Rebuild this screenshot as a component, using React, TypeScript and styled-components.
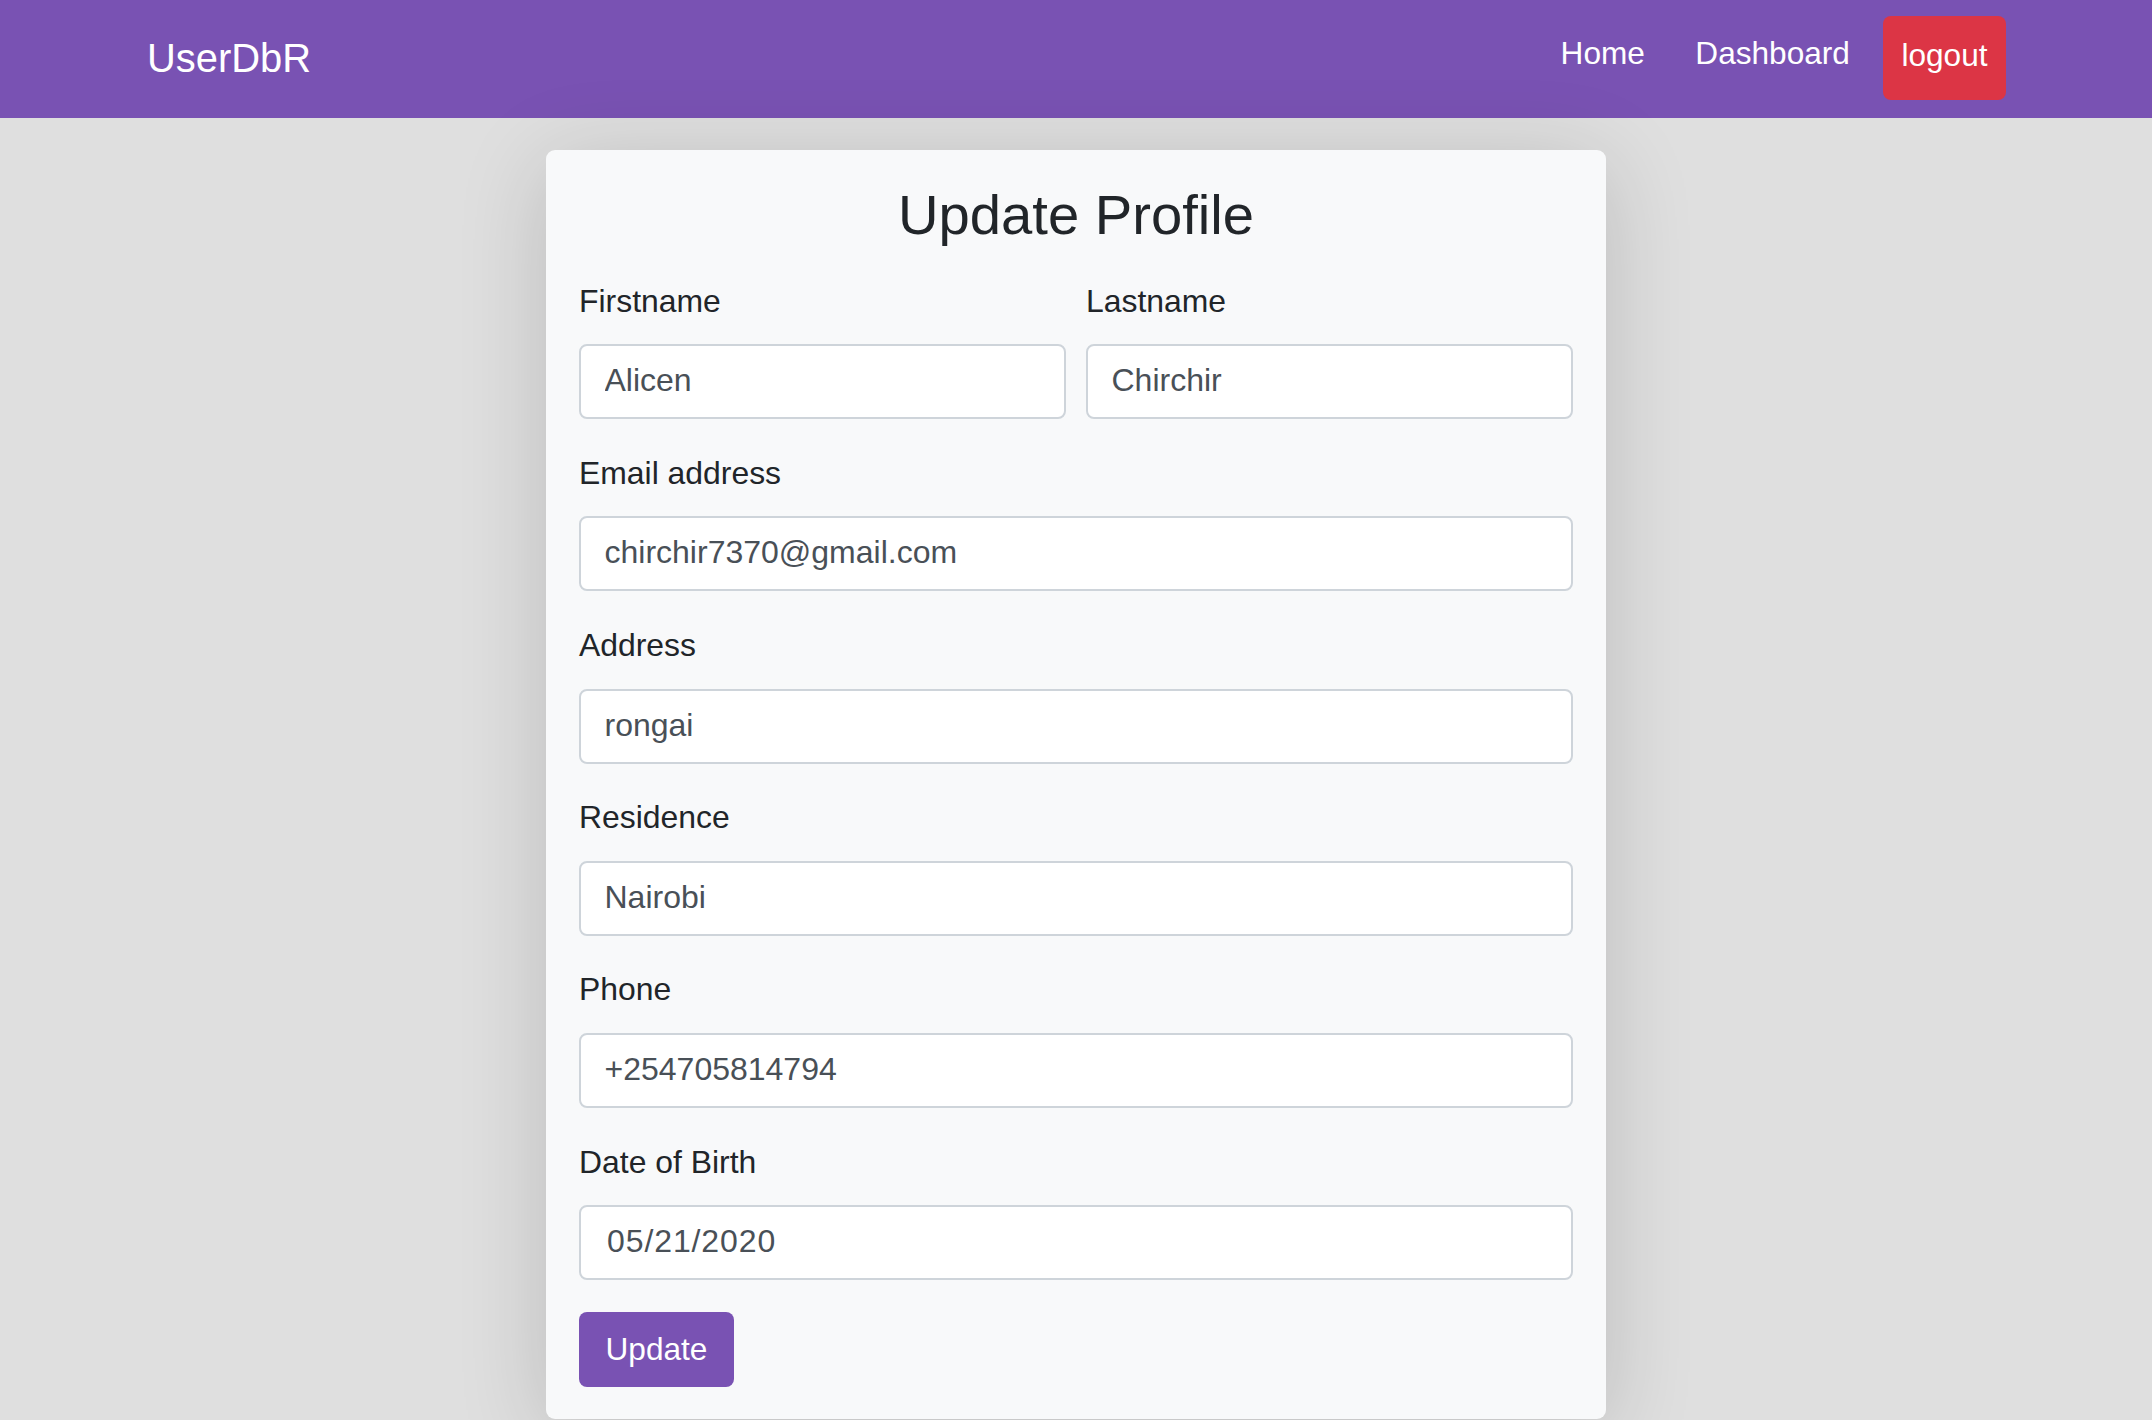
import React from "react";
import styled, { createGlobalStyle } from "styled-components";

const GlobalStyle = createGlobalStyle`
  html, body {
    margin: 0;
    padding: 0;
    overflow: hidden;
  }
  body {
    background: #dfdfdf;
    font-family: "Liberation Sans", Arial, Helvetica, sans-serif;
    color: #212529;
    min-height: 100vh;
  }
  * { box-sizing: border-box; }
`;

const Page = styled.div`
  display: flex;
  flex-direction: column;
  min-height: 100vh;
`;

const NavBar = styled.nav`
  height: 118px;
  background: #7952b3;
  display: flex;
  align-items: center;
  justify-content: space-between;
  padding: 0 146px 0 147px;
`;

const Brand = styled.a`
  font-size: 39.9px;
  line-height: 59px;
  margin-bottom: 2px;
  color: #fff;
  text-decoration: none;
`;

const NavItems = styled.div`
  display: flex;
  align-items: flex-start;
  align-self: flex-start;
  margin-top: 16px;
`;

const NavLink = styled.a<{ $gap: number }>`
  font-size: 31.6px;
  line-height: 47px;
  color: #fff;
  text-decoration: none;
  margin-top: 14px;
  margin-right: ${(p) => p.$gap}px;
`;

const LogoutButton = styled.button`
  font-family: inherit;
  font-size: 31.6px;
  line-height: 47px;
  color: #fff;
  background: #dc3545;
  border: none;
  border-radius: 8px;
  padding: 15.5px 18.5px 21px;
  cursor: pointer;
`;

const Card = styled.div`
  width: 1060px;
  margin: 32px auto 0;
  background: #f8f9fa;
  border-radius: 9px;
  padding: 31.5px 33px 32px;
  box-shadow: 0 14px 90px rgba(0, 0, 0, 0.16);
`;

const Title = styled.h3`
  margin: 0 0 30px;
  font-size: 56.2px;
  line-height: 66.6px;
  font-weight: 400;
  text-align: center;
  color: #212529;
`;

const Row = styled.div`
  display: grid;
  grid-template-columns: 1fr 1fr;
  column-gap: 20px;
`;

const Group = styled.div`
  margin-bottom: 30.8px;
`;

const Label = styled.label`
  display: block;
  font-size: 31.9px;
  line-height: 47px;
  margin-bottom: 19.3px;
  color: #212529;
`;

const Input = styled.input<{ $indent?: number; $spacing?: number }>`
  display: block;
  width: 100%;
  height: 75px;
  padding: 0 0 2px ${(p) => 23.5 + (p.$indent ?? 0)}px;
  font-family: inherit;
  font-size: 32px;
  letter-spacing: ${(p) => p.$spacing ?? 0}px;
  color: #495057;
  background: #fff;
  border: 2px solid #ced4da;
  border-radius: 8px;
  outline: none;
`;

const SubmitButton = styled.button`
  margin-top: 1px;
  height: 75px;
  padding: 0 26.5px;
  font-family: inherit;
  font-size: 31.6px;
  color: #fff;
  background: #7952b3;
  border: none;
  border-radius: 8px;
  cursor: pointer;
`;

const fields = [
  { label: "Email address", value: "chirchir7370@gmail.com" },
  { label: "Address", value: "rongai" },
  { label: "Residence", value: "Nairobi" },
  { label: "Phone", value: "+254705814794" },
  { label: "Date of Birth", value: "05/21/2020", indent: 2.5, spacing: 0.9 },
];

export default function App() {
  return (
    <Page>
      <GlobalStyle />
      <NavBar>
        <Brand href="#">UserDbR</Brand>
        <NavItems>
          <NavLink href="#" $gap={50.5}>Home</NavLink>
          <NavLink href="#" $gap={33}>Dashboard</NavLink>
          <LogoutButton>logout</LogoutButton>
        </NavItems>
      </NavBar>
      <Card>
        <Title>Update Profile</Title>
        <form onSubmit={(e) => e.preventDefault()}>
          <Row>
            <Group>
              <Label>Firstname</Label>
              <Input defaultValue="Alicen" />
            </Group>
            <Group>
              <Label>Lastname</Label>
              <Input defaultValue="Chirchir" />
            </Group>
          </Row>
          {fields.map((f) => (
            <Group key={f.label}>
              <Label>{f.label}</Label>
              <Input defaultValue={f.value} $indent={f.indent} $spacing={f.spacing} />
            </Group>
          ))}
          <SubmitButton type="submit">Update</SubmitButton>
        </form>
      </Card>
    </Page>
  );
}
